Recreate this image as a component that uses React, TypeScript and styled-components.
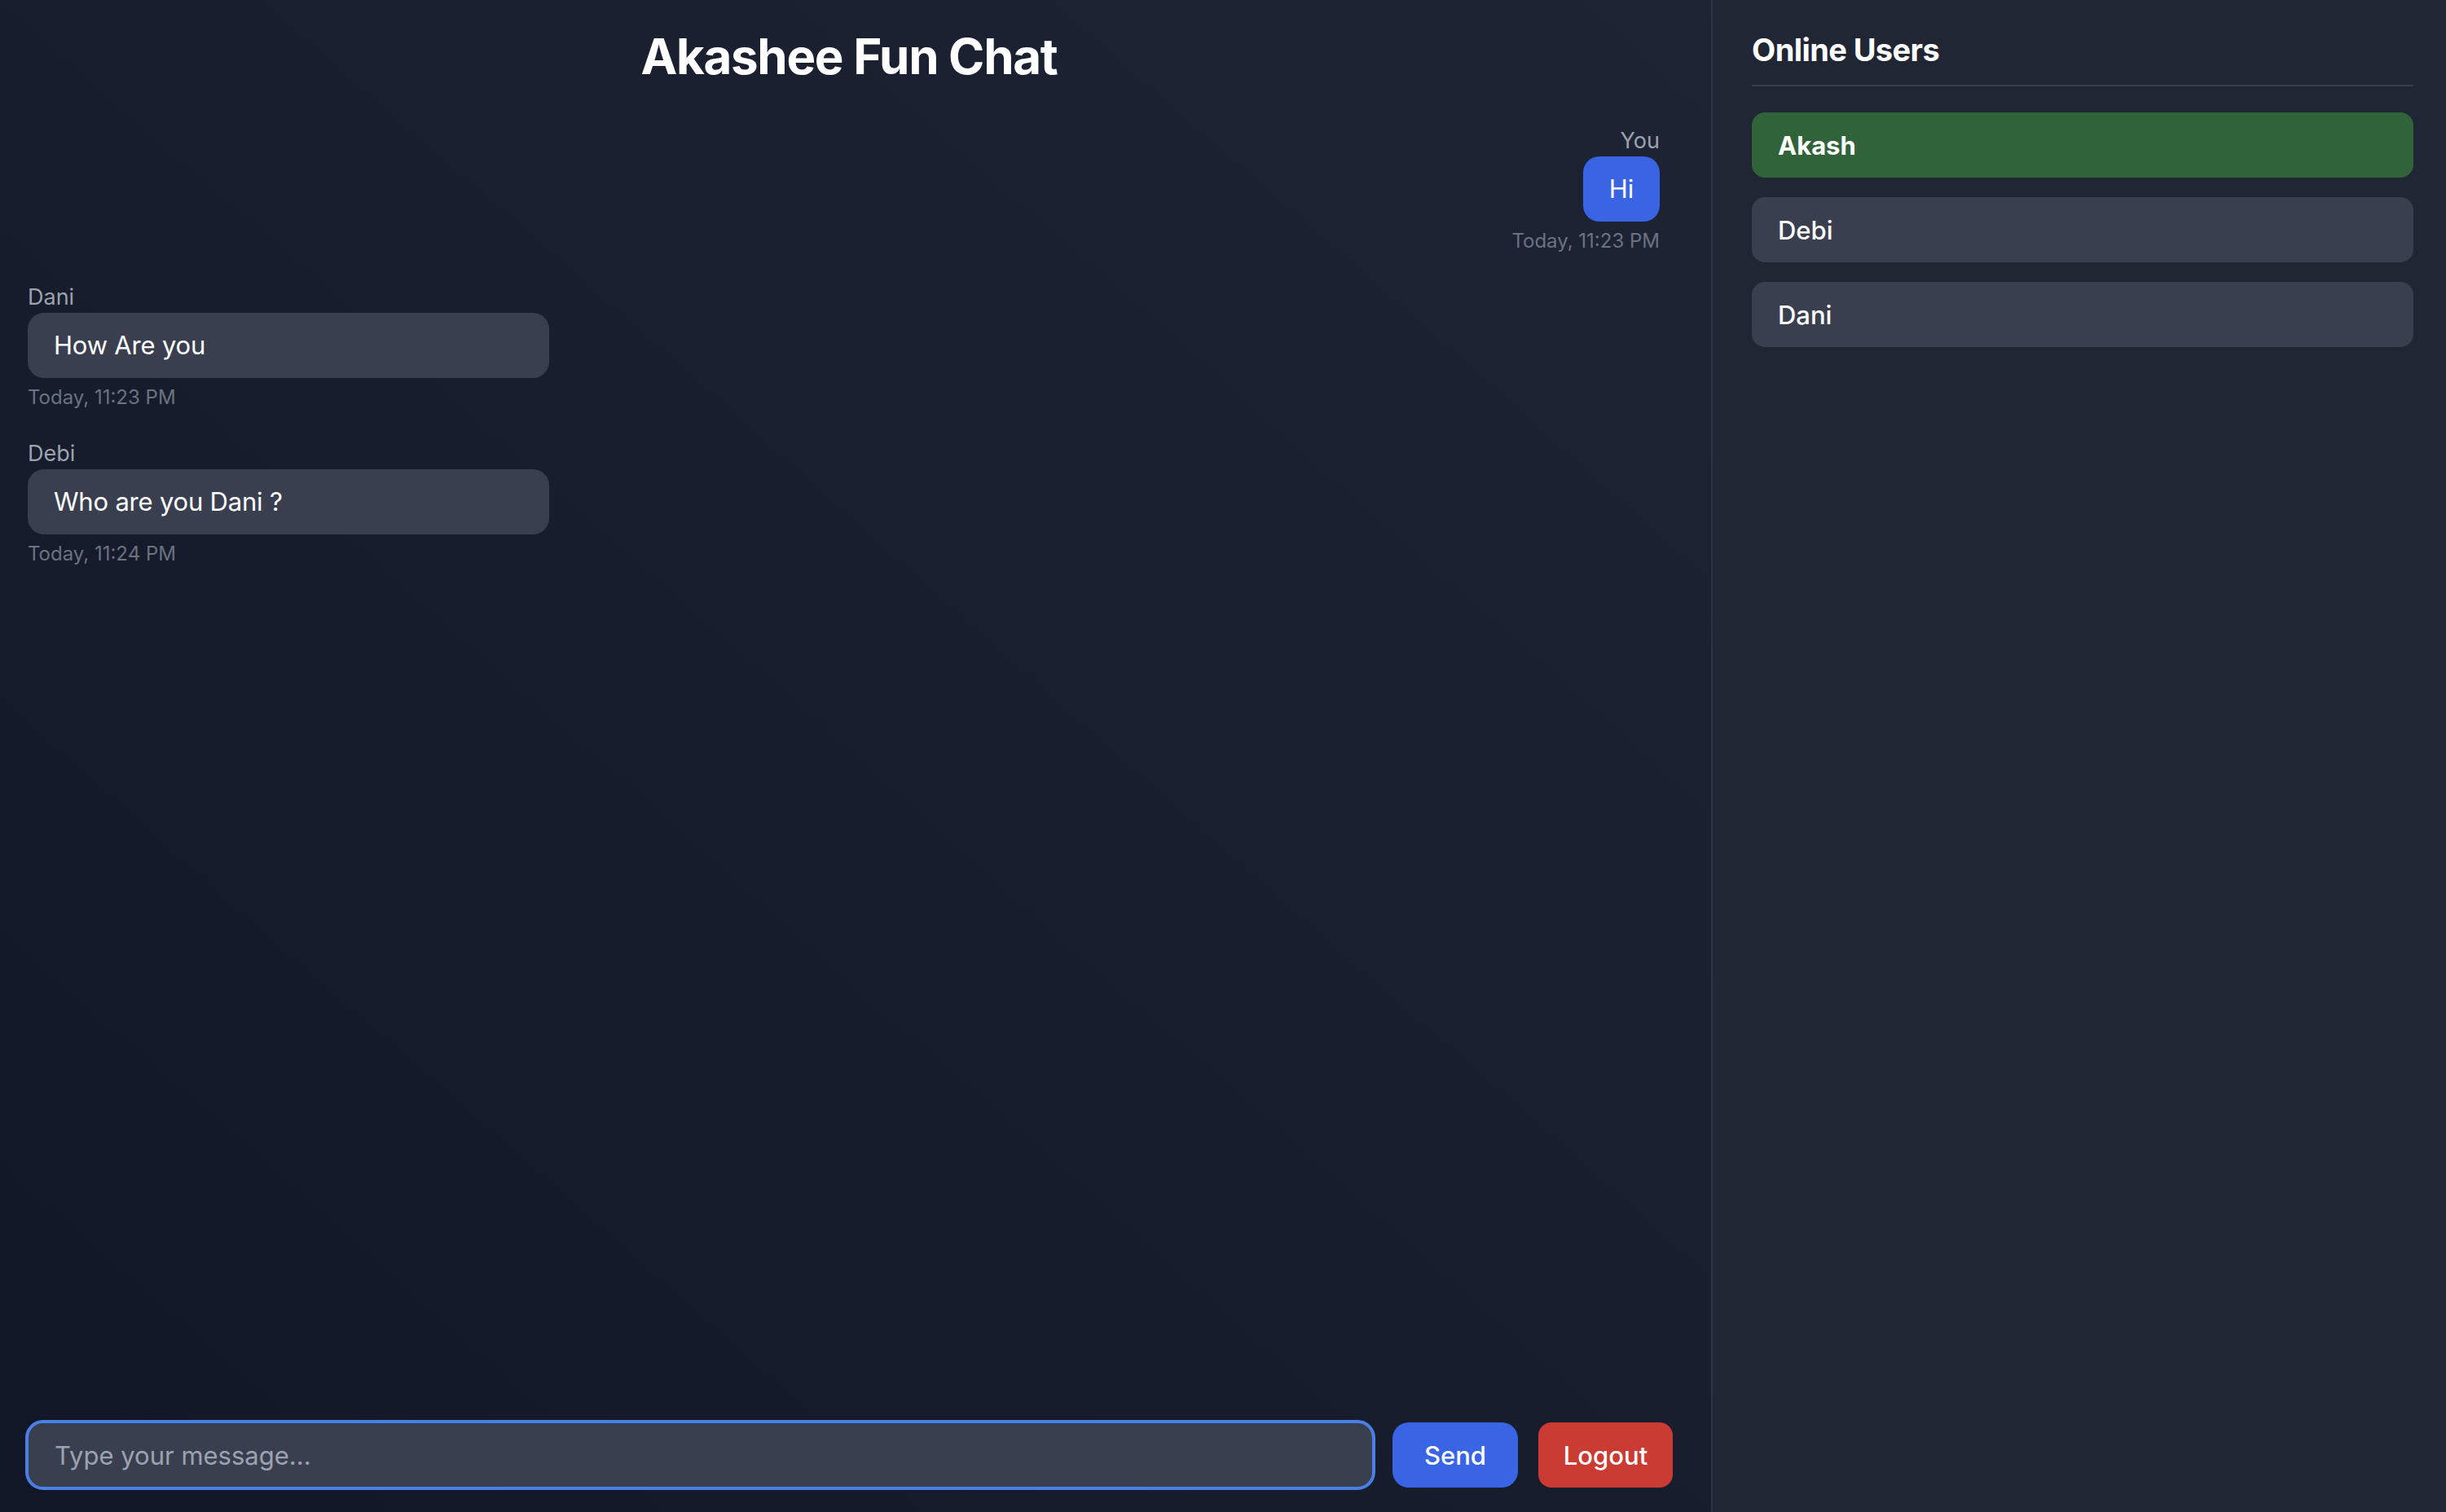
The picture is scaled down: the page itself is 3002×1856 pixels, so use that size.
import React from "react";
import styled, { createGlobalStyle } from "styled-components";

const GlobalStyle = createGlobalStyle`
  html, body {
    margin: 0;
    padding: 0;
    background: #111827;
  }
  body {
    font-family: Inter, "Noto Sans", "Liberation Sans", sans-serif;
    -webkit-font-smoothing: antialiased;
  }
  * { box-sizing: border-box; }
`;

const Page = styled.div`
  display: flex;
  width: 100vw;
  height: 100vh;
  overflow: hidden;
`;

const Main = styled.main`
  flex: 1;
  display: flex;
  flex-direction: column;
  min-width: 0;
  padding: 33px 47px 27px 31px;
  background: linear-gradient(to top right, #111726, #1f2434);
`;

const Title = styled.h1`
  margin: 0;
  text-align: center;
  font-size: 60px;
  line-height: 72px;
  font-weight: 700;
  letter-spacing: -1.3px;
  color: #ffffff;
`;

const Messages = styled.div`
  flex: 1;
  display: flex;
  flex-direction: column;
  gap: 33px;
  margin-top: 48px;
  padding: 0 16px 0 3px;
  overflow-y: auto;
`;

const MessageBlock = styled.div<{ $mine?: boolean }>`
  display: flex;
  flex-direction: column;
  align-items: ${(p) => (p.$mine ? "flex-end" : "flex-start")};
  align-self: ${(p) => (p.$mine ? "flex-end" : "flex-start")};
`;

const Sender = styled.div`
  font-size: 27px;
  line-height: 39px;
  color: #9ca3af;
`;

const Bubble = styled.div<{ $mine?: boolean }>`
  width: ${(p) => (p.$mine ? "auto" : "640px")};
  padding: 16px 32px;
  border-radius: 20px;
  font-size: 31px;
  line-height: 48px;
  letter-spacing: -0.2px;
  color: #ffffff;
  background: ${(p) => (p.$mine ? "#3964e4" : "#3a3f50")};
`;

const Time = styled.div`
  margin-top: 8px;
  font-size: 24px;
  line-height: 32px;
  color: #6b7280;
`;

const Composer = styled.div`
  display: flex;
  align-items: center;
`;

const MessageInput = styled.input`
  flex: 1;
  min-width: 0;
  height: 86px;
  padding: 0 32px;
  border: 4px solid #4a7fe6;
  border-radius: 22px;
  outline: none;
  background: #3a3f50;
  color: #ffffff;
  font-family: inherit;
  font-size: 31px;
  &::placeholder {
    color: #9ca3af;
  }
`;

const ActionButton = styled.button<{ $variant: "send" | "logout" }>`
  flex: none;
  height: 80px;
  width: ${(p) => (p.$variant === "send" ? "154px" : "165px")};
  margin-left: ${(p) => (p.$variant === "send" ? "21px" : "25px")};
  border: none;
  border-radius: ${(p) => (p.$variant === "send" ? "20px" : "16px")};
  background: ${(p) => (p.$variant === "send" ? "#3964e4" : "#ca3b33")};
  color: #ffffff;
  font-family: inherit;
  font-size: 31px;
  font-weight: 500;
  cursor: pointer;
`;

const Sidebar = styled.aside`
  flex: none;
  width: 902px;
  display: flex;
  flex-direction: column;
  padding: 35px 40px 0 48px;
  border-left: 2px solid #2e3444;
  background: #212635;
`;

const SidebarTitle = styled.h2`
  margin: 0;
  padding-bottom: 17px;
  border-bottom: 2px solid #3a3f4f;
  font-size: 38px;
  line-height: 52px;
  font-weight: 700;
  letter-spacing: -0.6px;
  color: #ffffff;
`;

const UserList = styled.ul`
  list-style: none;
  margin: 32px 0 0;
  padding: 0;
  display: flex;
  flex-direction: column;
  gap: 24px;
`;

const UserItem = styled.li<{ $me?: boolean }>`
  display: flex;
  align-items: center;
  height: 80px;
  padding: 0 32px;
  border-radius: 16px;
  font-size: 31px;
  font-weight: ${(p) => (p.$me ? 700 : 500)};
  color: #ffffff;
  background: ${(p) => (p.$me ? "#30633a" : "#3a3f50")};
`;

type Msg = { sender: string; text: string; time: string; mine?: boolean };

const messages: Msg[] = [
  { sender: "You", text: "Hi", time: "Today, 11:23 PM", mine: true },
  { sender: "Dani", text: "How Are you", time: "Today, 11:23 PM" },
  { sender: "Debi", text: "Who are you Dani ?", time: "Today, 11:24 PM" },
];

const users = [
  { name: "Akash", me: true },
  { name: "Debi" },
  { name: "Dani" },
];

export default function App() {
  return (
    <>
      <GlobalStyle />
      <Page>
        <Main>
          <Title>Akashee Fun Chat</Title>
          <Messages>
            {messages.map((m, i) => (
              <MessageBlock key={i} $mine={m.mine}>
                <Sender>{m.sender}</Sender>
                <Bubble $mine={m.mine}>{m.text}</Bubble>
                <Time>{m.time}</Time>
              </MessageBlock>
            ))}
          </Messages>
          <Composer>
            <MessageInput placeholder="Type your message..." />
            <ActionButton $variant="send">Send</ActionButton>
            <ActionButton $variant="logout">Logout</ActionButton>
          </Composer>
        </Main>
        <Sidebar>
          <SidebarTitle>Online Users</SidebarTitle>
          <UserList>
            {users.map((u) => (
              <UserItem key={u.name} $me={u.me}>
                {u.name}
              </UserItem>
            ))}
          </UserList>
        </Sidebar>
      </Page>
    </>
  );
}
